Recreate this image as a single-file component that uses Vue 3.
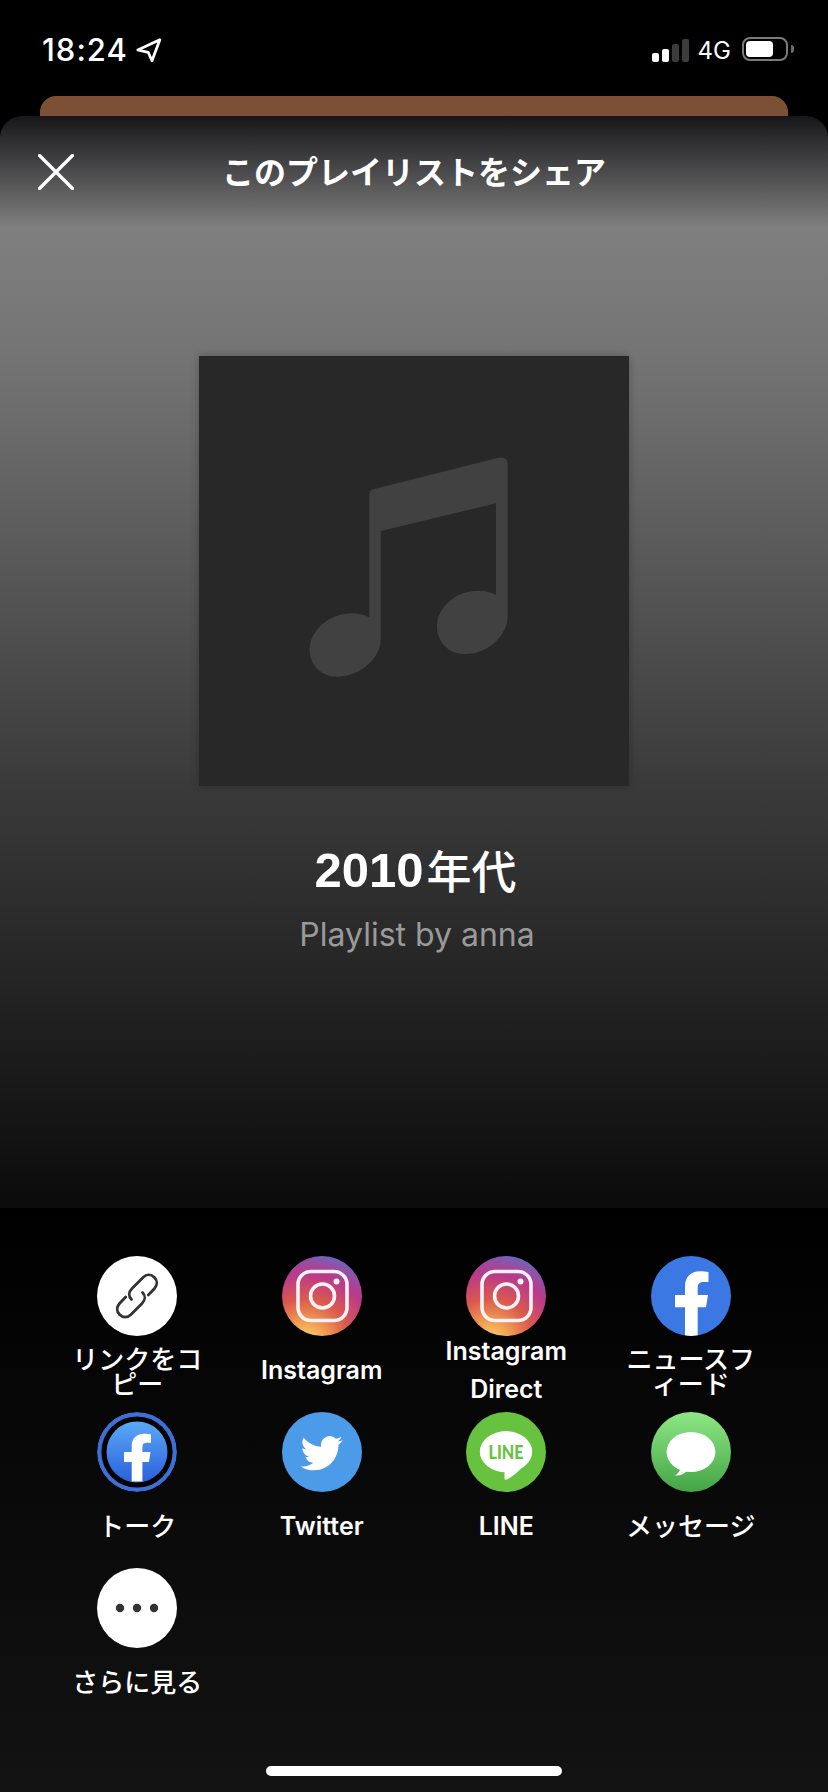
<script setup>
const tiles = [
  { id: 'link', label: 'リンクをコピー', cls: 'white', jp: true },
  { id: 'insta', label: 'Instagram', cls: 'insta' },
  { id: 'insta', label: 'Instagram Direct', cls: 'insta' },
  { id: 'fb', label: 'ニュースフィード', cls: 'fb', jp: true },
  { id: 'messenger', label: 'トーク', cls: 'ring', jp: true, one: true },
  { id: 'twitter', label: 'Twitter', cls: 'tw' },
  { id: 'line', label: 'LINE', cls: 'line' },
  { id: 'msg', label: 'メッセージ', cls: 'msg', jp: true, one: true },
  { id: 'more', label: 'さらに見る', cls: 'white', jp: true, one: true }
]
</script>

<template>
  <div class="screen">
    <header class="status">
      <div class="status-left">
        <span class="time">18:24</span>
        <svg class="arrow" viewBox="0 0 26 26" width="28" height="28">
          <path d="M24 3.5 L3.5 13 L13.3 15.3 L16.7 23 Z" fill="none" stroke="#fff" stroke-width="2.6" stroke-linejoin="round" />
        </svg>
      </div>
      <div class="status-right">
        <div class="signal">
          <i class="b1"></i><i class="b2"></i><i class="b3"></i><i class="b4"></i>
        </div>
        <span class="net">4G</span>
        <div class="battery"><div class="level"></div></div>
        <div class="cap"></div>
      </div>
    </header>
    <div class="peek"></div>
    <main class="sheet">
      <section class="top">
        <div class="head">
          <svg class="close" viewBox="0 0 36 36" width="36" height="36">
            <path d="M1.5 1.5 L34.5 34.5 M34.5 1.5 L1.5 34.5" stroke="#fff" stroke-width="3.2" stroke-linecap="round" />
          </svg>
          <h1 class="title">このプレイリストをシェア</h1>
        </div>
        <div class="cover">
          <svg viewBox="27 48 1290 1290" width="430" height="430">
            <path fill="#414141" d="M538 465 Q538 450 552 447 L925 353 Q953 348 953 372 L953 830 C953 880 900 942 825 942 C775 942 741 905 741 860 C741 800 800 752 865 752 C885 752 905 757 918 764 L918 490 L572 573 L572 900 C572 950 515 1010 440 1010 C395 1010 359 975 359 930 C359 870 420 820 485 820 C505 820 525 825 538 832 Z" />
          </svg>
        </div>
        <h2 class="name"><span class="digits">2010</span><span class="kanji">年代</span></h2>
        <p class="by">Playlist by anna</p>
      </section>
      <section class="panel">
        <div class="grid">
          <div v-for="t in tiles" :key="t.label" class="tile">
            <div class="icon" :class="t.cls">
              <svg viewBox="0 0 80 80" width="80" height="80">
                <g v-if="t.id === 'link'" fill="none" stroke="#333" stroke-width="2.8" stroke-linecap="round">
                  <path d="M51.3 39 L57.5 32.5 C60.5 29 60.5 24.5 57.5 21.5 C54 18 49.5 18 46 21.5 L35 32.5 C31.5 36 31.5 40.5 34.5 43.5" />
                  <path d="M28.7 41 L22.5 47.5 C19.5 51 19.5 55.5 22.5 58.5 C26 62 30.5 62 34 58.5 L45 47.5 C48.5 44 48.5 39.5 45.5 36.5" />
                </g>
                <g v-else-if="t.id === 'insta'" fill="none" stroke="#fdf3f6" stroke-width="3.6">
                  <rect x="16" y="15.5" width="49" height="49" rx="13" />
                  <circle cx="40.5" cy="40" r="12" />
                  <circle cx="54.5" cy="25.5" r="3" fill="#fdf3f6" stroke="none" />
                </g>
                <path v-else-if="t.id === 'fb'" fill="#fff" d="M46.7 80 L46.7 51.3 L55 51.3 L57 39 L46.7 39 L46.7 32 C46.7 28 48.5 26 52.5 26 L57.5 26 L57.5 16 C55 15.5 52 15.2 49 15.2 C40 15.2 34 20.5 34 30.5 L34 39 L24 39 L24 51.3 L34 51.3 L34 80 Z" />
                <g v-else-if="t.id === 'messenger'">
                  <defs>
                    <linearGradient id="msgr" x1="0" y1="0" x2="0" y2="1">
                      <stop offset="0" stop-color="#5aa9f6" />
                      <stop offset="1" stop-color="#2b5fdb" />
                    </linearGradient>
                  </defs>
                  <circle cx="40" cy="40" r="37.8" fill="#000" stroke="#3e6fd6" stroke-width="4.4" />
                  <circle cx="40" cy="40" r="30.5" fill="url(#msgr)" />
                  <path fill="#fff" d="M45.4 69.5 L45.4 50 L52 50 L53.5 40 L45.4 40 L45.4 35 C45.4 32 47 30.8 50 30.8 L54 30.8 L54 22.3 C52 22 49.5 21.7 47.2 21.7 C40 21.7 34.7 26 34.7 33.8 L34.7 40 L27 40 L27 50 L34.7 50 L34.7 69.5 Z" />
                </g>
                <path v-else-if="t.id === 'twitter'" transform="translate(18.7 20.2) scale(1.75)" fill="#fff" d="M23.953 4.57a10 10 0 01-2.825.775 4.958 4.958 0 002.163-2.723c-.951.555-2.005.959-3.127 1.184a4.92 4.92 0 00-8.384 4.482C7.69 8.095 4.067 6.13 1.64 3.162a4.822 4.822 0 00-.666 2.475c0 1.71.87 3.213 2.188 4.096a4.904 4.904 0 01-2.228-.616v.06a4.923 4.923 0 003.946 4.827 4.996 4.996 0 01-2.212.085 4.936 4.936 0 004.604 3.417 9.867 9.867 0 01-6.102 2.105c-.39 0-.779-.023-1.17-.067a13.995 13.995 0 007.557 2.209c9.053 0 13.998-7.496 13.998-13.985 0-.21 0-.42-.015-.63A9.935 9.935 0 0024 4.59z" />
                <g v-else-if="t.id === 'line'">
                  <ellipse cx="40" cy="39.7" rx="26.2" ry="20.6" fill="#fff" />
                  <path fill="#fff" d="M38.5 57 L38.5 66 C38.5 68 40 68 42 67 C47 64 52 60 57 54 Z" />
                  <text x="40" y="46.5" text-anchor="middle" textLength="35" lengthAdjust="spacingAndGlyphs" class="line-text">LINE</text>
                </g>
                <g v-else-if="t.id === 'msg'" fill="#fff">
                  <ellipse cx="40" cy="40" rx="24.4" ry="20" />
                  <path d="M30 54 C30 58 27 61.5 24 63.5 C29 64 33 62 37 58.5 Z" />
                </g>
                <g v-else-if="t.id === 'more'" fill="#333">
                  <circle cx="23" cy="40" r="4.2" />
                  <circle cx="40" cy="40" r="4.2" />
                  <circle cx="57" cy="40" r="4.2" />
                </g>
              </svg>
            </div>
            <div class="label-box">
              <span class="label" :class="{ jp: t.jp, one: t.one }">{{ t.label }}</span>
            </div>
          </div>
        </div>
        <div class="home"></div>
      </section>
    </main>
  </div>
</template>

<style>
html, body { margin: 0; background: #000; }
</style>

<style scoped>
.screen {
  width: 828px;
  height: 1792px;
  background: #000;
  color: #fff;
  display: flex;
  flex-direction: column;
  overflow: hidden;
  font-family: "Inter", "Noto Sans CJK JP", sans-serif;
}
.status {
  height: 96px;
  flex: none;
  display: flex;
  justify-content: space-between;
  padding: 36px 34px 0 42px;
  box-sizing: border-box;
}
.status-left { display: flex; align-items: flex-start; gap: 6px; }
.time {
  font-family: "Inter", sans-serif;
  font-size: 31px;
  font-weight: 500;
  line-height: 27px;
  letter-spacing: 1px;
}
.status-right { display: flex; align-items: flex-start; height: 26px; }
.signal { display: flex; align-items: flex-end; gap: 3px; height: 24px; margin-top: 2px; }
.signal i { display: block; width: 7px; border-radius: 2px; background: #3c3c3c; }
.signal .b1 { height: 9px; background: #fff; }
.signal .b2 { height: 13px; background: #fff; }
.signal .b3 { height: 18px; }
.signal .b4 { height: 23px; }
.net {
  font-family: "Inter", sans-serif;
  font-size: 24px;
  font-weight: 400;
  line-height: 24px;
  margin: 3px 11px 0 9px;
}
.battery {
  width: 46px;
  height: 24px;
  margin-top: 1px;
  border: 2px solid #7a7a7a;
  border-radius: 8px;
  box-sizing: border-box;
  padding: 2px;
}
.level { width: 27px; height: 16px; background: #fff; border-radius: 4px; }
.cap {
  width: 3px;
  height: 8px;
  margin: 9px 0 0 3px;
  background: #6c6c6c;
  border-radius: 0 3px 3px 0;
}
.peek {
  flex: none;
  height: 40px;
  margin: 0 40px -20px;
  background: #7c5034;
  border-radius: 16px 16px 0 0;
}
.sheet {
  position: relative;
  flex: 1;
  display: flex;
  flex-direction: column;
  border-radius: 22px 22px 0 0;
  overflow: hidden;
}
.top {
  flex: 1;
  display: flex;
  flex-direction: column;
  align-items: center;
  background: linear-gradient(180deg, #17171a 0, #7f7f7f 112px, #747474 240px, #3a3a3a 671px, #0b0b0b 1092px);
}
.head {
  position: relative;
  width: 100%;
  height: 108px;
  margin-bottom: 2px;
  flex: none;
  display: flex;
  align-items: center;
  justify-content: center;
}
.close { position: absolute; left: 38px; top: 38px; }
.title {
  margin: 0;
  font-family: "Noto Sans CJK JP", sans-serif;
  font-size: 32px;
  font-weight: 700;
  line-height: 40px;
}
.cover {
  margin-top: 130px;
  width: 430px;
  height: 430px;
  flex: none;
  background: #282828;
  box-shadow: 0 0 8px rgba(0, 0, 0, 0.25);
}
.cover svg { display: block; }
.name {
  margin: 56px 0 0 3px;
  height: 56px;
  display: flex;
  align-items: center;
  line-height: 56px;
  font-weight: 700;
}
.digits { font-family: "Liberation Sans", sans-serif; font-size: 49px; font-weight: 700; }
.kanji {
  font-family: "Noto Sans CJK JP", sans-serif;
  font-size: 45px;
  font-weight: 500;
  margin-left: 3px;
}
.by {
  margin: 17px 0 0 6px;
  font-size: 32px;
  line-height: 40px;
  color: #9a9a9a;
}
.panel {
  position: relative;
  flex: none;
  height: 584px;
  box-sizing: border-box;
  padding: 48px 45px 0;
  background: linear-gradient(180deg, #000 0, #131313 100%);
}
.grid { display: grid; grid-template-columns: repeat(4, 1fr); grid-auto-rows: 156px; }
.tile { display: flex; flex-direction: column; align-items: center; }
.icon { width: 80px; height: 80px; flex: none; border-radius: 50%; overflow: hidden; }
.icon svg { display: block; }
.white { background: #fff; }
.insta {
  background:
    radial-gradient(circle at 30% 108%, #fbd77f 0, #f3a653 18%, #db5a4d 42%, #bb3a8a 66%, rgba(176, 58, 150, 0) 88%),
    linear-gradient(200deg, #5a74c6 0, #8b4fa9 40%, #b0408f 100%);
}
.fb { background: #3b78e3; }
.ring { background: #000; }
.tw { background: #4c9be8; }
.line { background: #66c23f; }
.line-text { font-family: "Lato", sans-serif; font-size: 18px; font-weight: 900; fill: #66c23f; }
.msg { background: linear-gradient(180deg, #8fe785 0, #43a544 100%); }
.label-box {
  height: 68px;
  width: 134px;
  display: flex;
  align-items: center;
  justify-content: center;
  text-align: center;
}
.label {
  font-size: 25px;
  font-weight: 600;
  line-height: 38px;
  color: #fff;
}
.label.jp {
  font-family: "Noto Sans CJK JP", sans-serif;
  font-weight: 500;
  font-size: 26px;
  line-height: 25px;
}
.label.one { margin-bottom: 4px; }
.home {
  position: absolute;
  left: 266px;
  bottom: 16px;
  width: 296px;
  height: 10px;
  border-radius: 5px;
  background: #fff;
}
</style>
